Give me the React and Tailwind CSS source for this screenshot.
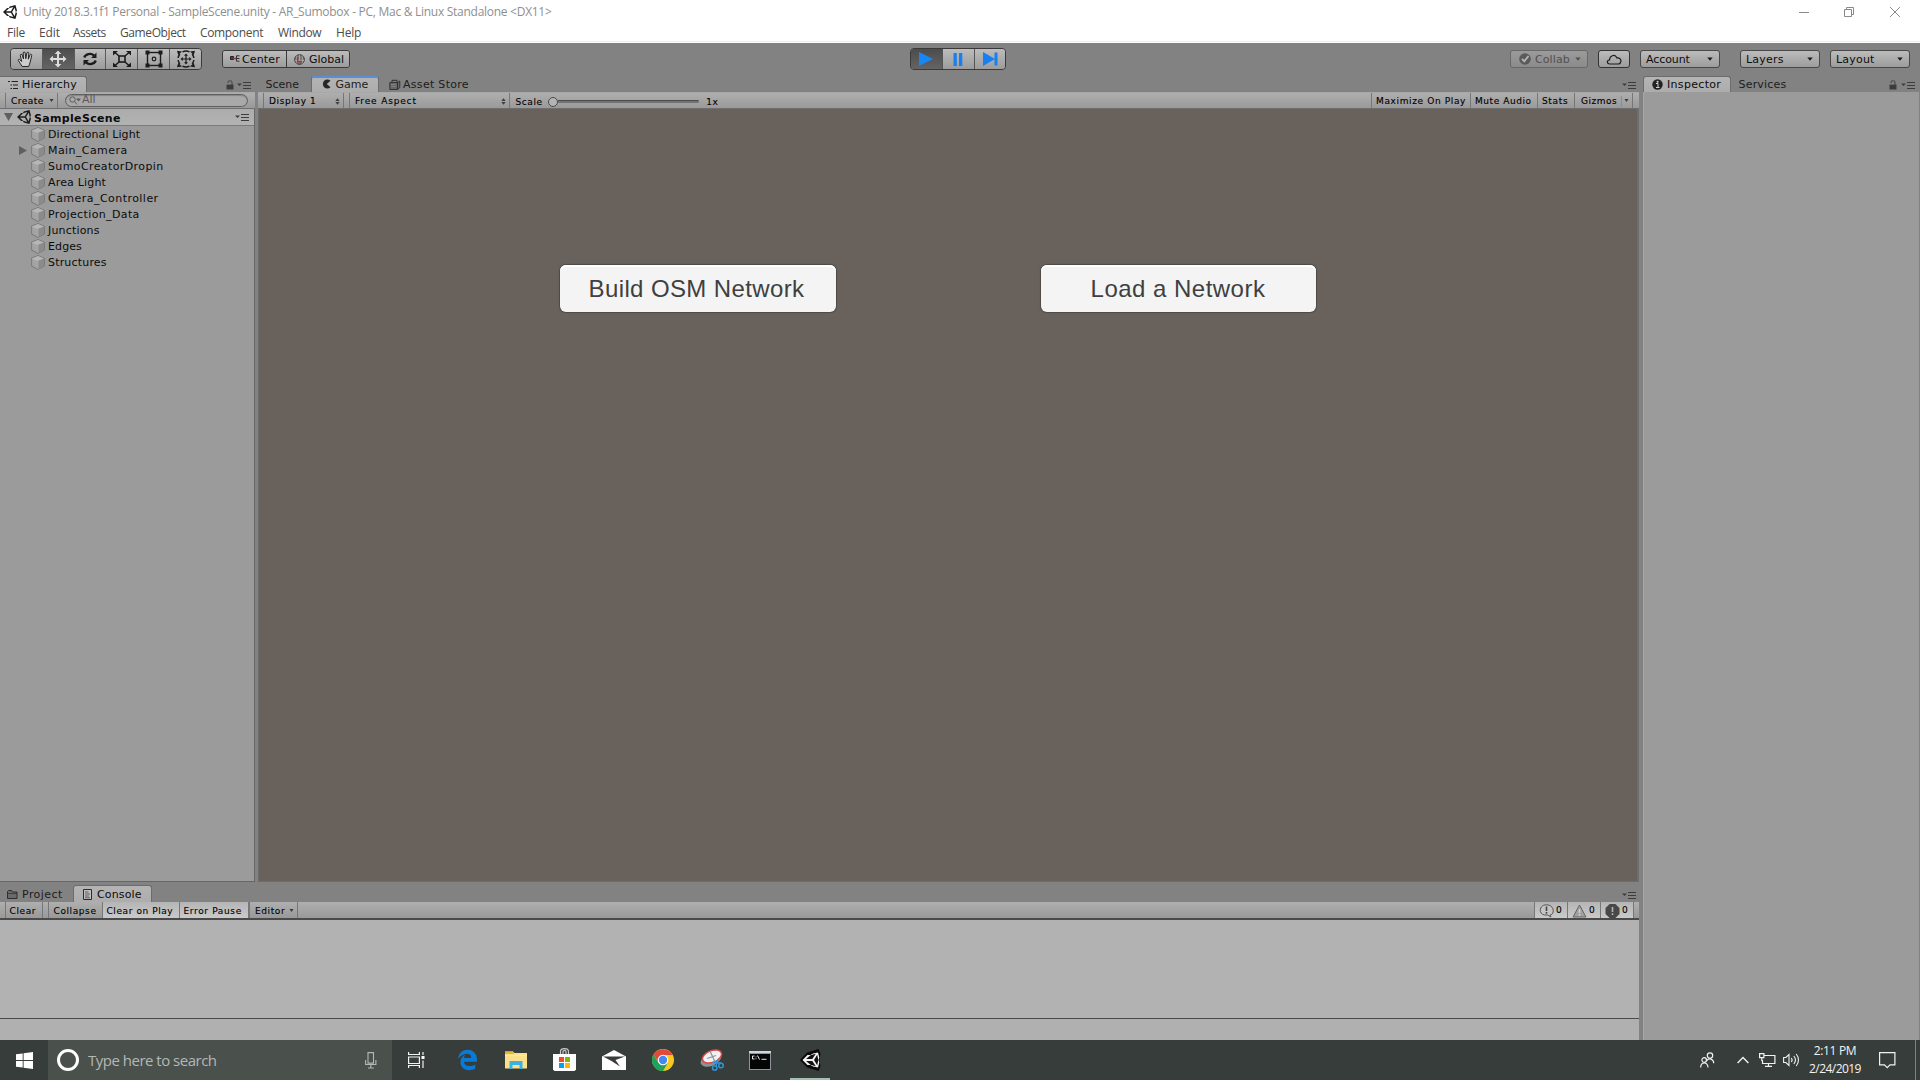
import React from "react";
import { FaEdgeLegacy } from "react-icons/fa";

/* ---------- small glyphs ---------- */

const UnityLogo = ({ className = "" }) => (
  <svg viewBox="15 14 484 484" fill="currentColor" className={className}>
    <path d="M498.110 206.400L445.310 14.720 248.200 66.080 219 116.140l-59.200-.43L15.540 256l144.280 140.320 59.170-.43 29.240 50 197.080 51.360 52.800-191.620-30-49.630zM223.770 124.200L374.550 86.510 288 232.330H114.870zm0 263.630L114.870 279.710H288l86.550 145.810zm193 14L330.170 256l86.580-145.840L458.560 256z" />
  </svg>
);

const MenuGlyph = ({ className = "" }) => (
  <svg width="14" height="7" viewBox="0 0 14 7" className={className}>
    <path d="M0 1.500h5L2.500 4z" fill="#3c3c3c" />
    <path d="M6 .5h8M6 3.500h8M6 6.500h8" stroke="#3c3c3c" strokeWidth="1" />
  </svg>
);

const LockGlyph = ({ className = "" }) => (
  <svg width="8" height="10" viewBox="0 0 8 10" className={className}>
    <path d="M2 3V2.400C2 .2 6 .2 6 2.400V5" fill="none" stroke="#4a4a4a" strokeWidth="1.100" />
    <rect x="0.500" y="4.600" width="7" height="4.900" fill="#3c3c3c" />
  </svg>
);

const Caret = ({ className = "", color = "#1a1a1a" }) => (
  <svg width="6" height="4" viewBox="0 0 6 4" className={className}>
    <path d="M.3 .5h5.400L3 3.800z" fill={color} />
  </svg>
);

const SmallCaret = ({ className = "" }) => (
  <svg width="5" height="4" viewBox="0 0 5 4" className={className}>
    <path d="M.5 0h4L2.500 3z" fill="#3a3a3a" />
  </svg>
);

const UpDown = ({ className = "" }) => (
  <svg width="5" height="7" viewBox="0 0 5 7" className={className}>
    <path d="M.3 3L2.500 .3 4.700 3zM.3 4L2.500 6.700 4.700 4z" fill="#3f3f3f" />
  </svg>
);

const Cube = ({ className = "" }) => (
  <svg width="14" height="15" viewBox="0 0 14 15" className={className}>
    <path d="M7 .6l6.400 2.600v7.900L7 14.400.6 11.100V3.200z" fill="#a3a3a3" stroke="#6e6e6e" strokeWidth=".8" />
    <path d="M7 1l6 2.400-6 2.700-6-2.700z" fill="#b6b6b6" />
    <path d="M7 6.100l6-2.700v7.500l-6 3.100z" fill="#8b8b8b" />
    <path d="M1 3.400l6 2.700v7.900" fill="none" stroke="#b8b8b8" strokeWidth=".5" />
  </svg>
);

/* ---------- title bar and menu ---------- */

function TitleBar() {
  return (
    <div className="flex h-[23px] items-center">
      <UnityLogo className="ml-[3px] h-[14px] w-[14px] text-[#1c1c1c]" />
      <span className="ml-[6px] font-['Open_Sans',sans-serif] text-[12px] leading-none tracking-[-0.275px] text-[#8f8f8f]">
        Unity 2018.3.1f1 Personal - SampleScene.unity - AR_Sumobox - PC, Mac &amp; Linux Standalone &lt;DX11&gt;
      </span>
      <div className="ml-auto flex items-center pr-5">
        <svg width="10" height="10" className="mr-[35px]"><path d="M0 5.500h10" stroke="#8a8a8a" /></svg>
        <svg width="10" height="10" className="mr-[36px]">
          <path d="M.5 2.500h7v7h-7zM2.500 2.500v-2h7v7h-2" fill="none" stroke="#8a8a8a" />
        </svg>
        <svg width="10" height="10"><path d="M0 0l10 10M10 0L0 10" stroke="#8a8a8a" /></svg>
      </div>
    </div>
  );
}

function MenuBar() {
  return (
    <div className="flex h-[20px] items-center border-b border-white pl-[7px] font-['Open_Sans',sans-serif] text-[12px] leading-none text-[#4c4c4c] shadow-[inset_0_-1px_0_#ececec]">
      <span className="w-[32px] tracking-[-0.25px]">File</span>
      <span className="w-[34px] tracking-[-0.12px]">Edit</span>
      <span className="w-[47px] tracking-[-0.5px]">Assets</span>
      <span className="w-[80px] tracking-[-0.4px]">GameObject</span>
      <span className="w-[78px] tracking-[-0.34px]">Component</span>
      <span className="w-[58px] tracking-[-0.35px]">Window</span>
      <span className="tracking-[-0.2px]">Help</span>
    </div>
  );
}

/* ---------- main toolbar ---------- */

const raised = "bg-linear-to-b from-[#bcbcbc] to-[#9c9c9c]";

function ToolIcon({ kind }) {
  const s = { fill: "none", stroke: "#1c1c1c", strokeWidth: 1.6 };
  return (
    <svg width="20" height="18" viewBox="0 0 20 18">
      {kind === "hand" && (
        <path
          d="M6.200 16.500C5 14.500 3.400 12.400 2.300 10.600c-.6-1.200.9-1.800 1.800-.7l1.500 1.600L4.300 5.400c-.2-1.300 1.500-1.700 1.900-.4l1.300 4L7.200 3c0-1.400 1.800-1.400 2 0l.6 5.700L10.900 3c.3-1.300 2-1 1.900.3l-.5 5.900 1.700-4.400c.6-1.100 2-.5 1.700.7-.5 2.500-1 4.600-1.500 6.500-.3 1.500-.9 2.800-1.600 4.500z"
          fill="#cdcdcd" stroke="#262626" strokeWidth="1"
        />
      )}
      {kind === "move" && (
        <path d="M10 .5l3.300 3.500H11v4h4V5.700L18.500 9 15 12.300V10h-4v4h2.300L10 17.500 6.700 14H9v-4H5v2.300L1.500 9 5 5.700V8h4V4H6.700z" fill="#dcdcdc" />
      )}
      {kind === "rotate" && (
        <>
          <path d="M4.200 7.500C5.500 4 11 2.600 14 5.600M15.800 10.500C14.500 14 9 15.400 6 12.400" fill="none" stroke="#1c1c1c" strokeWidth="2.200" />
          <path d="M16.500 2.500v5.500h-5.500zM3.500 15.500V10H9z" fill="#1c1c1c" />
        </>
      )}
      {kind === "scale" && (
        <>
          <rect x="7" y="6" width="6" height="6" {...s} />
          <path d="M7 6L3 2.500M13 6l4-3.500M7 12l-4 3.500M13 12l4 3.500" {...s} strokeWidth="1.500" />
          <path d="M1 1h5L1 5.500zM19 1h-5l5 4.500zM1 17h5l-5-4.500zM19 17h-5l5-4.500z" fill="#1c1c1c" />
        </>
      )}
      {kind === "rect" && (
        <>
          <rect x="3.500" y="2.500" width="13" height="13" {...s} strokeWidth="1.400" />
          <path d="M1.500 .5h4v4h-4zM14.500 .5h4v4h-4zM1.500 13.500h4v4h-4zM14.500 13.500h4v4h-4z" fill="#1c1c1c" />
          <circle cx="10" cy="9" r="1.800" {...s} strokeWidth="1.200" />
        </>
      )}
      {kind === "all" && (
        <>
          <path d="M10 3.500l2 2.300h-1.400v2.600h2.600V7L15.500 9l-2.300 2V9.600h-2.600v2.600H12l-2 2.300-2-2.300h1.400V9.600H6.800V11L4.500 9l2.300-2v1.400h2.600V5.800H8z" fill="#1c1c1c" />
          <path d="M2.200 8A8 8 0 0 1 3.800 4M6.500 1.800A8 8 0 0 1 13.500 1.800M16.200 4A8 8 0 0 1 17.800 8M2.200 10A8 8 0 0 0 3.800 14M6.500 16.200A8 8 0 0 0 13.500 16.200M16.200 14A8 8 0 0 0 17.800 10" {...s} strokeWidth="1.500" />
          <path d="M1 .8l5 .6L2.200 5zM19 .8l-5 .6L17.800 5zM1 17.200l5-.6L2.200 13zM19 17.200l-5-.6L17.800 13z" fill="#1c1c1c" />
        </>
      )}
    </svg>
  );
}

const TOOLS = ["hand", "move", "rotate", "scale", "rect", "all"];

function MainToolbar() {
  return (
    <div className="flex h-[33px] items-start bg-[#828282] pt-[5px] pl-[10px] text-[#0c0c0c]">
      <div className="flex h-[22px] w-[192px] overflow-hidden rounded-[4px] border border-[#3a3a3a]">
        {TOOLS.map((k) => (
          <div
            key={k}
            className={
              "flex flex-1 items-center justify-center border-r border-[#5a5a5a] last:border-r-0 " +
              (k === "move" ? "bg-linear-to-b from-[#4e4e4e] to-[#646464]" : raised)
            }
          >
            <ToolIcon kind={k} />
          </div>
        ))}
      </div>
      <div className="mt-[2px] ml-[20px] flex h-[18px] w-[128px] overflow-hidden rounded-[3px] border border-[#3a3a3a]">
        <div className={"flex w-[64px] items-center border-r border-[#3a3a3a] pl-[7px] " + raised}>
          <svg width="10" height="8" className="mr-[2px]">
            <path d="M.5 1.500h3v3h-3z" fill="#444" stroke="#222" /><path d="M3 3.500h3" stroke="#a33" strokeWidth="1.500" />
            <path d="M9.500 .8h-3v5.400h3M7 3.500h2.500" fill="none" stroke="#333" />
          </svg>
          <span className="tracking-[0.15px]">Center</span>
        </div>
        <div className={"flex flex-1 items-center pl-[7px] " + raised}>
          <svg width="11" height="11" className="mr-[4px]">
            <circle cx="5.500" cy="5.500" r="4.800" fill="#777" stroke="#333" />
            <path d="M5.500 .5v6M1 6.500h9M3 1.500C2 4 2 7 3 9.500M8 1.500C9 4 9 7 8 9.500" fill="none" stroke="#c9c9c9" strokeWidth=".6" />
            <path d="M3.500 3v4.500h4.500" fill="none" stroke="#b82a35" strokeWidth="1.300" />
          </svg>
          <span>Global</span>
        </div>
      </div>

      <div className="ml-[560px] flex h-[22px] w-[96px] overflow-hidden rounded-[4px] border border-[#3a3a3a]">
        <div className="flex w-[32px] items-center justify-center border-r border-[#555] bg-linear-to-b from-[#4c4c4c] to-[#646464]">
          <svg width="16" height="14" className="mr-[2px]"><path d="M1 0l14 7-14 7z" fill="#1787f5" /></svg>
        </div>
        <div className={"flex w-[32px] items-center justify-center border-r border-[#555] " + raised}>
          <svg width="10" height="13" className="mr-[2px]"><path d="M.5 0h3.300v13H.5zM6 0h3.300v13H6z" fill="#1680f3" /></svg>
        </div>
        <div className={"flex flex-1 items-center justify-center " + raised}>
          <svg width="16" height="14" className="mr-px"><path d="M1 0l12 7-12 7zM12.500 .5h3v13h-3z" fill="#1680f3" /></svg>
        </div>
      </div>

      <div className="mt-[2px] ml-[504px] flex h-[18px] w-[78px] items-center rounded-[3px] border border-[#686868] bg-linear-to-b from-[#9b9b9b] to-[#8b8b8b] pl-[8px] text-[#515151]">
        <svg width="12" height="12" className="mr-[4px]">
          <circle cx="6" cy="6" r="5.800" fill="#5a5a5a" /><path d="M3 5.800l2.300 2.500L9.500 3" fill="none" stroke="#b5b5b5" strokeWidth="1.900" />
        </svg>
        <span className="tracking-[0.1px]">Collab</span>
        <Caret className="ml-[5px]" color="#515151" />
      </div>
      <div className={"mt-[2px] ml-[10px] flex h-[18px] w-[32px] items-center justify-center rounded-[3px] border border-[#333] " + raised}>
        <svg width="16" height="11" viewBox="0 0 16 11">
          <path d="M3.800 10C.6 9.800.6 6.200 3.500 6 3.500 1.800 8.800-.6 11 4c2.600-.3 4.400 1.500 3.800 3.600C14.500 9.300 13.300 10 12 10z" fill="none" stroke="#1c1c1c" strokeWidth="1.200" />
        </svg>
      </div>
      <DropButton className="ml-[10px]" label="Account" />
      <DropButton className="ml-[20px]" label="Layers" tracking="tracking-[0.2px]" />
      <DropButton className="ml-[10px]" label="Layout" tracking="tracking-[0.2px]" />
    </div>
  );
}

function DropButton({ label, className, tracking = "tracking-[-0.1px]" }) {
  return (
    <div className={"mt-[2px] flex h-[18px] w-[80px] items-center justify-between rounded-[3px] border border-[#484848] pr-[6px] pl-[5px] " + raised + " " + className}>
      <span className={tracking}>{label}</span>
      <Caret />
    </div>
  );
}

/* ---------- panel pieces ---------- */

const strip = "bg-linear-to-b from-[#afafaf] to-[#999999]";
const lit = "bg-linear-to-b from-[#b5b5b5] to-[#cacaca]";
const tabOn = "bg-linear-to-b from-[#b4b4b4] to-[#adadad] border-[#6c6c6c]";
const mini = "text-[9px] text-black [-webkit-text-stroke:0.12px_#000]";

function HierarchyPanel() {
  const items = [
    ["Directional Light", "tracking-[0.1px]"],
    ["Main_Camera", "tracking-[0.42px]"],
    ["SumoCreatorDropin", "tracking-[0.39px]"],
    ["Area Light", "tracking-[0.18px]"],
    ["Camera_Controller", "tracking-[0.46px]"],
    ["Projection_Data", "tracking-[0.37px]"],
    ["Junctions", "tracking-[0.18px]"],
    ["Edges", "tracking-[0.1px]"],
    ["Structures", "tracking-[0.18px]"],
  ];
  return (
    <section className="flex w-[255px] flex-col">
      <div className="flex h-[16px] items-center">
        <div className={"flex h-full w-[87px] items-center rounded-tr-[3px] border-t border-r pl-[8px] " + tabOn}>
          <svg width="10" height="10" className="mr-[4px]">
            <path d="M0 1.500h2M3.500 1.500H10M2.500 5h1.500M5 5h5M2.500 8.500h1.500M5 8.500h5" stroke="#222" strokeWidth="1.200" />
          </svg>
          <span className="tracking-[0.2px]">Hierarchy</span>
        </div>
        <LockGlyph className="mt-px mr-px ml-auto" />
        <MenuGlyph className="mt-[2px] mr-[4px] ml-[2px]" />
      </div>
      <div className={"flex h-[17px] items-center border-t border-b border-t-[#a8a8a8] border-b-[#6f6f6f] " + strip}>
        <div className={"ml-[5px] flex h-full w-[53px] items-center border-r border-l border-[#777] pt-px pl-[5px] " + mini}>
          <span className="tracking-[0.5px]">Create</span>
          <SmallCaret className="ml-[5px]" />
        </div>
        <div className="ml-[7px] flex h-[13px] w-[183px] items-center rounded-full border border-[#5f5f5f] bg-[#a9a9a9] pl-[3px] shadow-[inset_0_1px_1px_#868686]">
          <svg width="12" height="9" className="mr-px">
            <circle cx="3.500" cy="3.500" r="2.700" fill="none" stroke="#5c5c5c" /><path d="M5.500 5.500L8 8.500" stroke="#5c5c5c" />
            <path d="M7 2.500h5L9.500 5.500z" fill="#5c5c5c" />
          </svg>
          <span className="pb-px text-[11px] leading-[10px] text-[#5a5a5a]">All</span>
        </div>
      </div>
      <div className="flex-1 border-r border-b border-[#676767] bg-[#9b9b9b]">
        <div className="flex h-[17px] items-center border-b border-[#7a7a7a] bg-linear-to-b from-[#acacac] to-[#b2b2b2]">
          <svg width="9" height="8" className="ml-[4px]"><path d="M0 0h9L4.500 8z" fill="#5f5f5f" /></svg>
          <UnityLogo className="ml-[4px] h-[14px] w-[14px] text-[#1c1c1c]" />
          <span className="mt-[2px] ml-[3px] font-bold tracking-[0.33px]">SampleScene</span>
          <MenuGlyph className="mr-[5px] ml-auto" />
        </div>
        {items.map(([name, tr], i) => (
          <div key={name} className="flex h-[16px] items-center">
            <span className="flex w-[31px] items-center pl-[19px]">
              {i === 1 && <svg width="8" height="9"><path d="M0 0v9l8-4.500z" fill="#5f5f5f" /></svg>}
            </span>
            <Cube />
            <span className={"ml-[3px] " + tr}>{name}</span>
          </div>
        ))}
      </div>
    </section>
  );
}

function Cell({ w, children, className = "" }) {
  return (
    <div className={"flex h-full shrink-0 items-center border-r border-[#777] pt-px pl-[4px] whitespace-nowrap " + w + " " + className}>
      {children}
    </div>
  );
}

function CanvasButton({ children, className }) {
  return (
    <button className={"h-[47px] rounded-[6px] bg-[#f4f4f4] pt-px font-['Liberation_Sans',sans-serif] text-[24px] leading-none text-[#404040] shadow-[inset_0_2px_0_#ffffff,0_0_1px_1px_#4f4a46] " + className}>
      {children}
    </button>
  );
}

function GamePanel() {
  return (
    <section className="flex w-[1381px] flex-col">
      <div className="flex h-[16px] items-center text-[#1c1c1c]">
        <span className="w-[53px] pl-[7.500px]">Scene</span>
        <div className={"flex h-full w-[68px] items-center rounded-t-[2px] border-r border-l pl-[9.500px] shadow-[inset_0_2px_0_#5a8fd6] " + tabOn}>
          <svg width="9" height="10" className="mr-[5px]">
            <path d="M8.500 1.800A4.500 4.500 0 1 0 8.500 8.200L4.800 5z" fill="#262626" />
          </svg>
          <span className="pt-px">Game</span>
        </div>
        <svg width="12" height="11" className="mr-[2px] ml-[10px]">
          <path d="M.8 3.500h7.700v7H.8zM8.500 3.500l2.300-1.500v6.500l-2.300 2" fill="#666" stroke="#2e2e2e" strokeWidth=".9" />
          <path d="M2 5.500h5M2 7.500h5" stroke="#888" strokeWidth=".8" /><path d="M3 3V1.300h5V3" fill="none" stroke="#2e2e2e" />
        </svg>
        <span className="tracking-[0.3px]">Asset Store</span>
        <MenuGlyph className="mt-[2px] mr-[3px] ml-auto" />
      </div>
      <div className={"flex h-[17px] items-center border-t border-b border-t-[#a8a8a8] border-b-[#6f6f6f] pl-[5px] " + mini + " " + strip}>
        <Cell w="w-[81px]" className="border-l pl-[5px]!">
          <span className="tracking-[0.63px]">Display 1</span><UpDown className="mr-[3px] ml-auto" />
        </Cell>
        <Cell w="w-[6px]" />
        <Cell w="w-[160px]" className="pl-[5px]!">
          <span className="tracking-[0.84px]">Free Aspect</span><UpDown className="mr-[3px] ml-auto" />
        </Cell>
        <span className="ml-[5.500px] pt-[3px] tracking-[0.6px]">Scale</span>
        <div className="ml-[5.500px] flex items-center pt-[2px]">
          <span className="size-[10px] rounded-full border border-[#4a4a4a] bg-[#b4b4b4]" />
          <span className="h-[3px] w-[141px] rounded-r-full border-t border-[#4b4b4b] bg-[#737373]" />
        </div>
        <span className="ml-[7px] pt-[3px] tracking-[0.6px]">1x</span>
        <div className="ml-auto flex h-full border-l border-[#777]">
          <Cell w="w-[99px]"><span className="tracking-[0.63px]">Maximize On Play</span></Cell>
          <Cell w="w-[67px]"><span className="tracking-[0.57px]">Mute Audio</span></Cell>
          <Cell w="w-[37px]"><span className="tracking-[0.65px]">Stats</span></Cell>
          <Cell w="w-[58px]" className="pl-[6px]!">
            <span className="tracking-[0.5px]">Gizmos</span>
            <span className="ml-[4px] flex h-[11px] items-center border-l border-[#8c8c8c]"><SmallCaret className="ml-[2px]" /></span>
          </Cell>
          <span className="w-[6px]" />
        </div>
      </div>
      <div className="flex flex-1 items-start gap-[205px] border-r-2 border-b border-l border-[#6d6d6d] bg-[#69615b] pt-[156px] pl-[301px]">
        <CanvasButton className="w-[276px] pr-[3px] tracking-[0.38px]">Build OSM Network</CanvasButton>
        <CanvasButton className="w-[275px] pr-px tracking-[0.48px]">Load a Network</CanvasButton>
      </div>
    </section>
  );
}

function ConsolePanel() {
  return (
    <section className="flex h-[155px] flex-col">
      <div className="flex h-[17px] items-center">
        <div className="flex w-[73px] items-center pt-px pl-[7px] text-[#1c1c1c]">
          <svg width="11" height="9" className="mr-[4px]">
            <path d="M.5 8.500v-7l1-1h3l1 1.500h4.500v6.500z" fill="#6a6a6a" stroke="#2e2e2e" /><path d="M.5 3.500h9.500" stroke="#2e2e2e" strokeWidth=".7" />
          </svg>
          <span className="tracking-[0.45px]">Project</span>
        </div>
        <div className={"flex h-full w-[79px] items-center rounded-t-[3px] border-t border-r border-l pl-[9px] " + tabOn}>
          <svg width="10" height="11" className="mr-[4px]">
            <path d="M.5 .5h8v10h-8z" fill="#c0c0c0" stroke="#2b2b2b" /><path d="M2 3h3.500M2 5h5M2 7h4M2 8.800h5" stroke="#444" strokeWidth=".8" />
          </svg>
          <span className="tracking-[0.15px]">Console</span>
        </div>
        <MenuGlyph className="mt-[4px] mr-[3px] ml-auto" />
      </div>
      <div className={"flex h-[18px] items-center border-b-2 border-b-[#4a4a4a] pl-[5px] " + mini + " " + strip}>
        <Cell w="w-[38px]" className="border-l pt-[2px]! pl-[3.500px]!"><span className="tracking-[0.62px]">Clear</span></Cell>
        <Cell w="w-[6px]" />
        <Cell w="w-[54px]" className="pt-[2px]! pl-[4.500px]!"><span className="tracking-[0.6px]">Collapse</span></Cell>
        <Cell w="w-[77px]" className={"pt-[2px]! pl-[3.500px]! " + lit}><span className="tracking-[0.58px]">Clear on Play</span></Cell>
        <Cell w="w-[69px]" className={"pt-[2px]! pl-[3.500px]! " + lit}><span className="tracking-[0.64px]">Error Pause</span></Cell>
        <Cell w="w-[49px]" className="border-l pt-[2px]! pl-[5px]!">
          <span className="tracking-[0.6px]">Editor</span><SmallCaret className="ml-[4px]" />
        </Cell>
        <div className="ml-auto flex h-full border-l border-[#777]">
          <Cell w="w-[33px]" className={lit}>
            <svg width="16" height="14" className="mr-px">
              <path d="M7.500 .8c8.300 0 8.300 10 3.500 10.200l1 2-3.500-2C-1 12.500-1 .8 7.500.8z" fill="#c4c4c4" stroke="#555" strokeWidth="1" />
              <path d="M7.500 2.500v4.500M7.500 8v1.700" stroke="#444" strokeWidth="1.600" />
            </svg>0
          </Cell>
          <Cell w="w-[33px]" className={lit}>
            <svg width="15" height="14" className="mr-[2px]">
              <path d="M7.500 1L14 13H1z" fill="#a0a0a0" stroke="#666" /><path d="M7.500 5v4M7.500 10v1.700" stroke="#d2d2d2" strokeWidth="1.500" />
            </svg>0
          </Cell>
          <Cell w="w-[33px]" className={lit}>
            <svg width="15" height="14" className="mr-[2px]">
              <path d="M4.600 0h5.800L14.500 4.100v5.800L10.400 14H4.600L.5 9.900V4.100z" fill="#484848" /><path d="M7.500 3v5M7.500 9.300V11" stroke="#b5b5b5" strokeWidth="1.600" />
            </svg>0
          </Cell>
          <span className="w-[5px]" />
        </div>
      </div>
      <div className="h-[99px] border-b border-[#4a4a4a] bg-[#b2b2b2]" />
      <div className="flex-1 bg-[#b0b0b0]" />
    </section>
  );
}

function InspectorPanel() {
  return (
    <aside className="ml-[4px] flex flex-1 flex-col">
      <div className="flex h-[16px] items-center">
        <div className={"flex h-full w-[88px] items-center rounded-t-[3px] border-t border-r border-l pl-[8px] " + tabOn}>
          <svg width="11" height="11" className="mr-[4px]">
            <circle cx="5.500" cy="5.500" r="5.200" fill="#222" /><path d="M4 4.500h2V8.500M4 8.500h3.500M5 2.300h1.200v.9H5z" fill="none" stroke="#d0d0d0" strokeWidth="1" />
          </svg>
          <span className="tracking-[0.32px]">Inspector</span>
        </div>
        <span className="ml-[7.500px] tracking-[0.2px] text-[#1c1c1c]">Services</span>
        <LockGlyph className="mt-px ml-auto" />
        <MenuGlyph className="mt-[2px] mr-[5px] ml-[4px]" />
      </div>
      <div className="mr-px flex-1 border-l border-[#a6a6a6] bg-[#9b9b9b]" />
    </aside>
  );
}

/* ---------- Windows taskbar ---------- */

function Taskbar() {
  const line = { fill: "none", stroke: "#f2f2f2", strokeWidth: 1.2 };
  return (
    <footer className="flex h-[40px] items-center bg-[#373d3a] font-['Open_Sans',sans-serif]">
      <div className="flex w-[48px] justify-center">
        <svg width="17" height="17" viewBox="0 0 17 17"><path d="M0 2.300l6.700-.9v6.700H0zM7.600 1.200L17 0v8.100H7.600zM0 8.900h6.700v6.700L0 14.700zM7.600 8.900H17V17l-9.400-1.300z" fill="#fff" /></svg>
      </div>
      <div className="flex h-full w-[344px] items-center bg-[#4a504c] pl-[9px]">
        <span className="size-[22px] rounded-full border-[3px] border-white" />
        <span className="ml-[9px] text-[15px] leading-none tracking-[-0.5px] text-[#b4b8b5]">Type here to search</span>
        <svg width="12" height="17" className="mr-[15px] ml-auto">
          <path d="M3 .6h5.500v10.500H3zM.6 8v4.500h10.300V8M5.800 12.500V16M3 16h5.800" fill="none" stroke="#b4b8b5" strokeWidth="1.100" />
        </svg>
      </div>
      <svg width="17" height="16" className="ml-[16px]">
        <path d="M.6 0v2.500h10.800V0M.6 5h10.800v6.500H.6zM.6 16v-2.500h10.800V16M15 0v3M15 8.500V16" {...line} /><path d="M13.500 4h3v3h-3z" fill="#fff" />
      </svg>
      <FaEdgeLegacy className="ml-[32px] h-[22px] w-[21px] text-[#0a7ad8]" />
      <svg width="22" height="18" className="ml-[27px]">
        <path d="M0 .5h8l1.500 1.500H22v15.500H0z" fill="#fce08a" /><path d="M0 .5h8l1 2.500H0z" fill="#eab52f" /><path d="M0 4h22v1H0z" fill="#fbe9ae" />
        <path d="M4.500 10h13v8h-3v-4h-7v4h-3z" fill="#3cb2e4" />
      </svg>
      <svg width="23" height="23" className="mb-px ml-[26px]">
        <path d="M7.500 6V3.500C7.500-.3 15.500-.3 15.500 3.500V6M10 6V3.500c0-1.500 3-1.500 3 0V6" fill="none" stroke="#c8cbc9" strokeWidth="1.200" />
        <path d="M0 6h23v15.500L21.500 23h-20L0 21.500z" fill="#fff" />
        <path d="M6 9h5v5H6z" fill="#f04e23" /><path d="M12 9h5v5h-5z" fill="#7fba00" /><path d="M6 15h5v5H6z" fill="#00a4ef" /><path d="M12 15h5v5h-5z" fill="#fdb900" />
      </svg>
      <svg width="24" height="20" className="ml-[26px]">
        <path d="M12 0l12 6.500V20H0V6.500z" fill="#fff" /><path d="M1 6.500h22L13.500 10l4.500 6.500L9.500 11z" fill="#373d3a" />
      </svg>
      <svg width="22" height="22" viewBox="-11 -11 22 22" className="ml-[26px]">
        <circle r="11" fill="#f8c81c" />
        <path d="M-9.530-5.500A11 11 0 0 0 0 11L4.800 2.700 0 5-4.500 2.700z" fill="#1da261" />
        <path d="M-9.530-5.500L-4.300 2.500 0-5H9.530A11 11 0 0 0-9.530-5.500z" fill="#e04a3a" />
        <circle r="5.300" fill="#fff" /><circle r="4.200" fill="#4587f3" />
      </svg>
      <svg width="24" height="22" className="ml-[26px]">
        <ellipse cx="11" cy="10.500" rx="11" ry="6.200" transform="rotate(-24 11 10.500)" fill="#8e9192" />
        <ellipse cx="12" cy="7.500" rx="10" ry="5.800" transform="rotate(-22 12 7.500)" fill="#f1f1f3" stroke="#d5484a" strokeWidth="1.500" />
        <path d="M10 2l5.500 12M7 9.500l9-3" stroke="#8b9299" strokeWidth="1.200" />
        <path d="M12.500 13.500l9 .5M17 11l-1 7" stroke="#2d93d6" strokeWidth="1.500" />
        <circle cx="14.700" cy="19" r="2.200" fill="none" stroke="#2d93d6" strokeWidth="1.600" /><circle cx="21" cy="16.500" r="2.300" fill="none" stroke="#2d93d6" strokeWidth="1.600" />
      </svg>
      <svg width="22" height="19" className="ml-[25px]">
        <path d="M0 0h22v19H0z" fill="#8f959b" /><path d="M0 0h22v2H0z" fill="#cfd6dd" /><path d="M1 3h20v15H1z" fill="#050505" />
        <path d="M5.500 5H3.500v3h2M7 5.500v.8M7 7.400v.8M8.500 4.500L10.500 8.500M12.500 8.300h5" fill="none" stroke="#e6e6e6" />
      </svg>
      <div className="ml-[19px] flex h-full w-[40px] items-center justify-center border-b-2 border-[#a5bfb1]">
        <svg width="22" height="22" viewBox="0 0 22 22" className="mt-px ml-px">
          <path d="M0 11L7 3.500 18.500 0l2 4.500L19.500 11l1 6.500-2 4.500L7 18.500z" fill="#0a0a0a" />
          <path d="M2.500 11L7.500 6 10.500 6 13 4.500 18 3.500 19.300 8.500 18.500 11 19.300 13.500 18 18.500 13 17.500 10.500 16 7.500 16z" fill="#f4f4f4" />
          <path d="M6 10h6.300L15.800 4.800 10.500 6.300zM6 12h6.300l3.500 5.200-5.300-1.500zM14 11l3.200-5.200L18.300 11l-1.100 5.200z" fill="#111" />
        </svg>
      </div>

      <svg width="15" height="16" className="ml-auto">
        <circle cx="10" cy="3.600" r="2.700" {...line} /><circle cx="4.200" cy="8" r="2.300" {...line} />
        <path d="M.7 15.500C.7 9.500 8 9.500 8 15.500M6.800 8.500C9 5.800 13.500 6.500 13.800 11.300" {...line} />
      </svg>
      <svg width="12" height="8" className="ml-[22px]"><path d="M.6 7L6 1.500 11.400 7" {...line} strokeWidth="1.400" /></svg>
      <svg width="17" height="14" className="ml-[10px]">
        <path d="M5.500 2.500h10.400v8H3.500V7M.6 .6h4.300v4H.6zM2.800 5v3M9.500 10.500V13M6 13.300h7" {...line} />
      </svg>
      <svg width="17" height="14" className="ml-[7px]">
        <path d="M.6 4.500h2.300L6 1.600v10.800L2.900 9.500H.6zM8.300 5c1 1.200 1 2.800 0 4M10.800 3c2 2.400 2 5.600 0 8M13.200 1c3 3.500 3 8.500 0 12" {...line} strokeWidth="1.100" />
      </svg>
      <div className="ml-[7px] w-[56px] text-center text-[12px] leading-[18px] text-[#f4f4f4]">
        <div className="tracking-[-0.35px]">2:11 PM</div>
        <div className="tracking-[-0.55px]">2/24/2019</div>
      </div>
      <svg width="17" height="17" className="mr-[19px] ml-[16px]"><path d="M.6 .6h15.300v12.200H11L8.200 15.600 5.500 12.800H.6z" {...line} /></svg>
      <span className="mr-[4px] h-full w-px bg-[#7d827f]" />
    </footer>
  );
}

export default function App() {
  return (
    <div className="flex h-[1080px] w-[1920px] flex-col overflow-hidden bg-white font-['DejaVu_Sans',sans-serif] text-[11px] leading-none text-[#0c0c0c]">
      <TitleBar />
      <MenuBar />
      <MainToolbar />
      <main className="flex h-[964px] bg-[#828282]">
        <div className="flex w-[1639px] flex-col">
          <div className="flex h-[806px] justify-between">
            <HierarchyPanel />
            <GamePanel />
          </div>
          <div className="h-[3px]" />
          <ConsolePanel />
        </div>
        <InspectorPanel />
      </main>
      <Taskbar />
    </div>
  );
}
